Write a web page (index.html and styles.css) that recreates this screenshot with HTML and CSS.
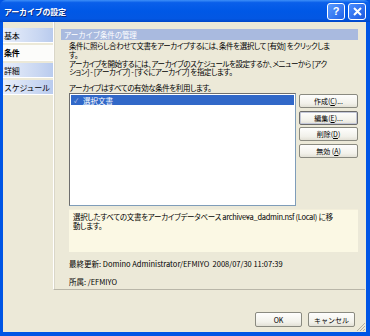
FILE: index.html
```html
<!DOCTYPE html>
<html lang="ja">
<head>
<meta charset="utf-8">
<link rel="stylesheet" href="styles.css">
</head>
<body>
<div class="window">
  <div class="titlebar">
    <span class="title">アーカイブの設定</span>
    <div class="tbtns">
      <span class="tbtn">?</span>
      <span class="tbtn close"><svg width="11" height="11" viewBox="0 0 11 11"><path d="M2 2 L9 9 M9 2 L2 9" stroke="#fff" stroke-width="2"/></svg></span>
    </div>
  </div>
  <div class="frame">
    <div class="client">
      <div class="main">
        <div class="tabs">
          <div class="tab">基本</div>
          <div class="tab sel">条件</div>
          <div class="tab">詳細</div>
          <div class="tab">スケジュール</div>
        </div>
        <div class="panel">
          <div class="sechead">アーカイブ条件の管理</div>
          <div class="body">
            <p class="desc">条件に照らし合わせて文書をアーカイブするには、条件を選択して [有効] をクリックしま<br>す。<br>アーカイブを開始するには、アーカイブのスケジュールを設定するか、メニューから [アク<br>ション] - [アーカイブ] - [すぐにアーカイブ] を指定します。</p>
            <p class="desc use">アーカイブはすべての有効な条件を利用します。</p>
            <div class="listrow">
              <div class="list">
                <div class="item"><span class="chk">✓</span>選択文書</div>
              </div>
              <div class="btns">
                <div class="btn">作成(<u>C</u>)...</div>
                <div class="btn def">編集(<u>E</u>)...</div>
                <div class="btn">削除(<u>D</u>)</div>
                <div class="btn">無効 (<u>A</u>)</div>
              </div>
            </div>
            <div class="info">選択したすべての文書をアーカイブデータベース archive¥a_dadmin.nsf (Local) に移<br>動します。</div>
            <p class="meta">最終更新: Domino Administrator/EFMIYO&nbsp;&nbsp;2008/07/30 11:07:39</p>
            <p class="meta owner">所属: /EFMIYO</p>
          </div>
        </div>
      </div>
      <div class="footer">
        <div class="btn wide">OK</div>
        <div class="btn wide">キャンセル</div>
        <svg class="grip" width="10" height="10" viewBox="0 0 10 10"><path d="M9 1 L1 9 M9 4 L4 9 M9 7 L7 9" stroke="#B4B0A0" stroke-width="1"/></svg>
      </div>
    </div>
  </div>
</div>
</body>
</html>
```
FILE: styles.css
```css
* { box-sizing: border-box; }
html, body { margin: 0; padding: 0; }
body {
  width: 370px; height: 336px; overflow: hidden;
  font-family: "Noto Sans CJK JP", "Liberation Sans", sans-serif;
  font-size: 7.5px; color: #000;
}
.window { width: 370px; height: 336px; display: flex; flex-direction: column; background: #0055E5; }
.titlebar {
  height: 22px; flex: none; display: flex; align-items: center; justify-content: space-between;
  padding: 0 4px 0 4px;
  background: linear-gradient(#3D8FF8 0, #0A5FEA 12%, #0058E6 50%, #0357E3 85%, #0047C8 100%);
  border-radius: 6px 6px 0 0;
}
.title { color: #fff; font-weight: bold; font-size: 8px; letter-spacing: -0.2px; text-shadow: 1px 1px 0 #0A2A80; }
.tbtns { display: flex; gap: 3px; }
.tbtn {
  width: 18px; height: 17px; border: 1px solid #fff; border-radius: 3px;
  background: linear-gradient(135deg, #5A9AFF, #1F62E8);
  color: #fff; font: bold 11px "Liberation Sans", sans-serif;
  display: flex; align-items: center; justify-content: center;
}
.tbtn.close { background: linear-gradient(135deg, #4C8EFF, #1A58E0); }
.frame { flex: 1; display: flex; padding: 0 4px 4px 3px; }
.client { flex: 1; background: #ECE9D8; display: flex; flex-direction: column; }
.main { height: 268px; flex: none; display: flex; }
.tabs { width: 50px; display: flex; flex-direction: column; padding-top: 6px; gap: 2px; }
.tab {
  height: 15px; display: flex; align-items: center; padding-left: 1px;
  font-size: 8px; white-space: nowrap; letter-spacing: -0.3px;
  background: linear-gradient(90deg, #E8EEFA 0, #C9D7F2 70%, #B9CBEE 100%);
  border-bottom: 1px solid #fff;
}
.tab.sel { background: #FCFCFA; font-weight: bold; height: 16px; }
.panel {
  flex: 1; margin-right: 1px; overflow: hidden;
  border-left: 1px solid #FFFFFF; border-bottom: 1px solid #B9B6A8;
  box-shadow: inset 1px 0 0 #D9D6C8;
  padding: 7px 7px 0 7px;
}
.sechead {
  height: 11px; background: #A9BADF; color: #fff;
  font-size: 7.5px; padding-left: 3px; display: flex; align-items: center;
  letter-spacing: -0.2px;
}
.body { padding-left: 8px; }
p { margin: 0; }
.desc { margin-top: 2px; line-height: 8.8px; white-space: nowrap; letter-spacing: -0.42px; font-feature-settings: "palt"; }
.use { margin-top: 6px; line-height: 9px; }
.listrow { display: flex; margin-top: 1px; gap: 3px; }
.list {
  width: 227px; height: 113px; background: #fff;
  border: 1px solid #7F9DB9; border-left-color: #6E6E6E; border-top-color: #6E6E6E;
  padding: 1px;
}
.item { height: 10px; background: #3168C8; color: #fff; display: flex; align-items: center; padding-left: 3px; }
.chk { font-size: 6px; margin-right: 5px; color: #C8D4F0; }
.btns { display: flex; flex-direction: column; gap: 2.5px; padding-top: 1px; }
.btn {
  width: 59px; height: 14px; display: flex; align-items: center; justify-content: center;
  background: linear-gradient(#FEFEFD, #F2F1EA 70%, #E3E1D6);
  border: 1px solid #8A8A80; border-radius: 2px; font-size: 7px; white-space: nowrap;
}
.btn.def { box-shadow: inset 0 0 0 1px #C4C8D8; border-color: #6B6B6B; }
.btn u { text-decoration: underline; }
.info {
  margin-top: 3px; height: 43px; background: #FBF8E4; padding: 3px 4px;
  line-height: 8.5px; white-space: nowrap; letter-spacing: -0.3px; font-feature-settings: "palt";
  border-top: 1px solid #F2EEDA;
}
.meta { margin-top: 7px; font-size: 7.5px; line-height: 9px; white-space: nowrap; }
.owner { margin-top: 9px; }
.footer { flex: 1; display: flex; justify-content: flex-end; align-items: flex-end; gap: 6px; padding: 0 11px 5px 0; position: relative; }
.btn.wide { width: 47px; height: 15px; }
.grip { position: absolute; right: 0; bottom: 0; }
```
